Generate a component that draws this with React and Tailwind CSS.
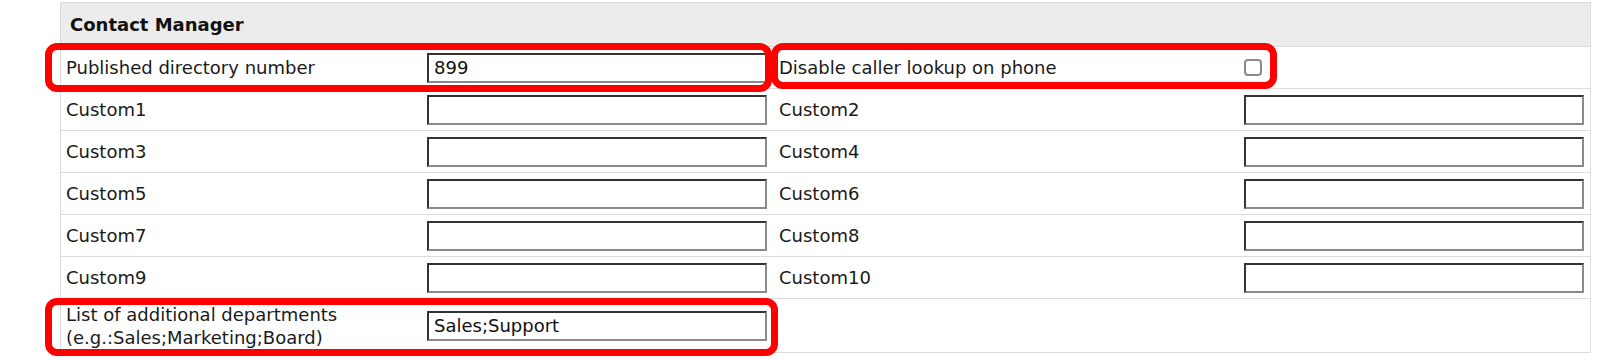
import React from "react";

const Input = ({ value = "" }) => (
  <div className="w-[340px] h-[30px] border-2 border-t-[#333] border-l-[#333] border-b-[#8a8a8a] border-r-[#8a8a8a] bg-white flex items-center pl-[5px] text-[18px] text-[#111]">
    {value}
  </div>
);

const Row = ({ children, tall }) => (
  <div className={"grid grid-cols-[361px_351px_466px_352px] border-t border-[#dcdcdc] items-center " + (tall ? "h-[54px]" : "h-[42px]")}>
    {children}
  </div>
);

const Label = ({ children, pl = "pl-[5px]" }) => (
  <div className={pl + " text-[18px] leading-[23px] text-[#1a1a1a]"}>{children}</div>
);

export default function App() {
  const customs = [
    ["Custom1", "Custom2"],
    ["Custom3", "Custom4"],
    ["Custom5", "Custom6"],
    ["Custom7", "Custom8"],
    ["Custom9", "Custom10"],
  ];
  return (
    <div className="relative w-[1600px] h-[360px] bg-white overflow-hidden" style={{ fontFamily: '"DejaVu Sans", Verdana, sans-serif' }}>
      <div className="ml-[60px] mt-[2px] w-[1531px] border-x border-t border-b border-[#dcdcdc]">
        <div className="h-[43px] bg-[#ececec] flex items-center pl-[9px] text-[18px] font-bold text-[#111]">
          Contact Manager
        </div>
        <Row>
          <Label>Published directory number</Label>
          <div className="pl-[5px]"><Input value="899" /></div>
          <Label pl="pl-[6px]">Disable caller lookup on phone</Label>
          <div className="pl-[5px]">
            <div className="w-[18px] h-[17px] border-2 border-[#8a8a8a] rounded-[4px] bg-white" />
          </div>
        </Row>
        {customs.map(([a, b]) => (
          <Row key={a}>
            <Label>{a}</Label>
            <div className="pl-[5px]"><Input /></div>
            <Label pl="pl-[6px]">{b}</Label>
            <div className="pl-[5px]"><Input /></div>
          </Row>
        ))}
        <Row tall>
          <Label>
            List of additional departments
            <br />
            (e.g.:Sales;Marketing;Board)
          </Label>
          <div className="pl-[5px]"><Input value="Sales;Support" /></div>
          <div />
          <div />
        </Row>
      </div>
      <div className="absolute left-[45px] top-[43px] w-[727px] h-[49px] border-[7px] border-[#ff0000] rounded-[12px]" />
      <div className="absolute left-[771px] top-[43px] w-[506px] h-[46px] border-[7px] border-[#ff0000] rounded-[12px]" />
      <div className="absolute left-[45px] top-[298px] w-[733px] h-[58px] border-[7px] border-[#ff0000] rounded-[12px]" />
    </div>
  );
}
